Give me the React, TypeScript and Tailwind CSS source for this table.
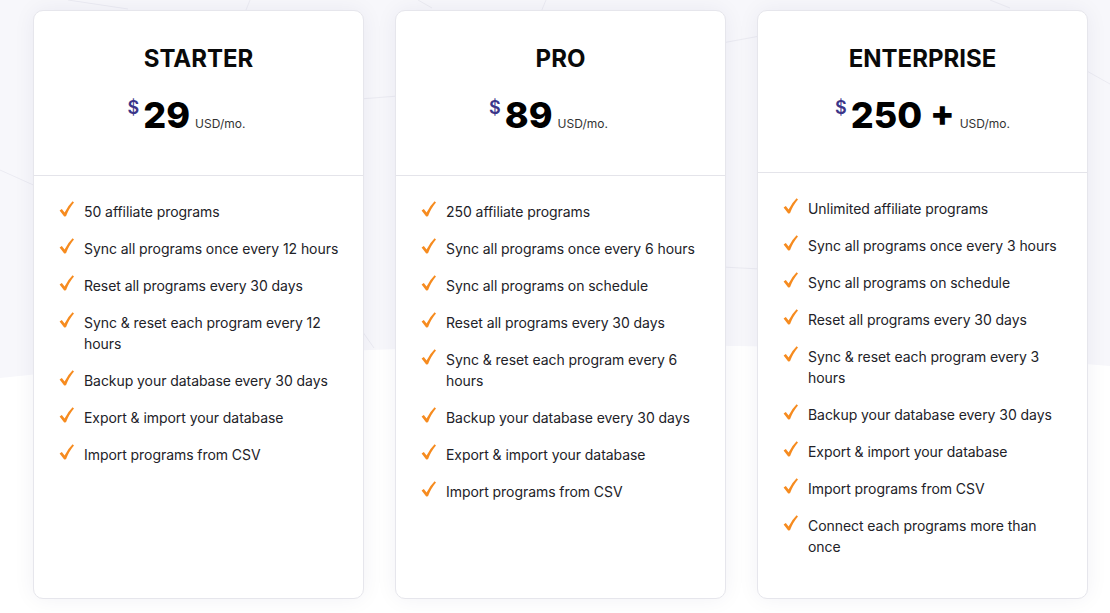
import React from "react";

type Plan = {
  name: string;
  price: string;
  shift: boolean;
  headerH: string;
  features: string[];
};

const plans: Plan[] = [
  {
    name: "STARTER",
    price: "29",
    shift: true,
    headerH: "h-[165px]",
    features: [
      "50 affiliate programs",
      "Sync all programs once every 12 hours",
      "Reset all programs every 30 days",
      "Sync & reset each program every 12 hours",
      "Backup your database every 30 days",
      "Export & import your database",
      "Import programs from CSV",
    ],
  },
  {
    name: "PRO",
    price: "89",
    shift: true,
    headerH: "h-[165px]",
    features: [
      "250 affiliate programs",
      "Sync all programs once every 6 hours",
      "Sync all programs on schedule",
      "Reset all programs every 30 days",
      "Sync & reset each program every 6 hours",
      "Backup your database every 30 days",
      "Export & import your database",
      "Import programs from CSV",
    ],
  },
  {
    name: "ENTERPRISE",
    price: "250 +",
    shift: false,
    headerH: "h-[162px]",
    features: [
      "Unlimited affiliate programs",
      "Sync all programs once every 3 hours",
      "Sync all programs on schedule",
      "Reset all programs every 30 days",
      "Sync & reset each program every 3 hours",
      "Backup your database every 30 days",
      "Export & import your database",
      "Import programs from CSV",
      "Connect each programs more than once",
    ],
  },
];

function Check() {
  return (
    <svg
      width="15"
      height="16"
      viewBox="0 0 15 16"
      className="flex-none mr-[10px]"
    >
      <path
        d="M0.6 9.4 L2.8 7.9 L5.6 11.6 Q8.8 4.8 13.6 0.2 L15 1.6 Q10.4 6.8 7 15.2 L5.2 15.4 Z"
        fill="#f68b1f"
      />
    </svg>
  );
}

function Card({ plan }: { plan: Plan }) {
  return (
    <div className="w-[331px] h-[589px] flex-none flex flex-col bg-white border border-[#e6e6ec] rounded-[10px] shadow-[0_0_22px_rgba(40,40,90,0.06)]">
      <div
        className={`${plan.headerH} flex-none flex flex-col items-center border-b border-[#e4e4ea]`}
      >
        <div className="mt-[32px] text-[24px] leading-[32px] font-bold text-[#0a0a0a]">
          {plan.name}
        </div>
        <div
          className={`mt-[22px] flex items-start ${plan.shift ? "pr-[24px]" : ""}`}
        >
          <span className="text-[18px] leading-[18px] mt-[2px] mr-[4px] text-[#3b3589] font-semibold">
            $
          </span>
          <div className="flex items-baseline">
            <span className="text-[36px] leading-[36px] font-extrabold text-black">
              {plan.price}
            </span>
            <span className="ml-[5px] text-[12px] text-[#333]">USD/mo.</span>
          </div>
        </div>
      </div>
      <ul className="flex flex-col gap-[16px] pt-[25px] pl-[25px] pr-[16px]">
        {plan.features.map((f) => (
          <li key={f} className="flex items-start">
            <Check />
            <span className="text-[14px] leading-[21px] tracking-[-0.06px] text-[#222228]">
              {f}
            </span>
          </li>
        ))}
      </ul>
    </div>
  );
}

export default function App() {
  return (
    <div
      className="relative w-full h-[613px] overflow-hidden bg-white"
      style={{ fontFamily: "Inter, 'Noto Sans', Arial, sans-serif" }}
    >
      <svg
        className="absolute inset-0"
        width="1110"
        height="613"
        viewBox="0 0 1110 613"
      >
        <path d="M0 0 H1110 V366 Q555 318 0 378 Z" fill="#f7f7fb" />
        <g stroke="#ebebf2" strokeWidth="1" fill="none">
          <line x1="0" y1="170" x2="40" y2="188" />
          <line x1="68" y1="0" x2="128" y2="9" />
          <line x1="418" y1="0" x2="432" y2="8" />
          <line x1="546" y1="0" x2="541" y2="12" />
          <line x1="250" y1="0" x2="246" y2="10" />
          <line x1="360" y1="99" x2="398" y2="96" />
          <line x1="722" y1="43" x2="760" y2="36" />
          <line x1="722" y1="267" x2="760" y2="269" />
          <line x1="1085" y1="70" x2="1110" y2="84" />
          <line x1="360" y1="328" x2="374" y2="348" />
          <line x1="990" y1="0" x2="1010" y2="8" />
        </g>
      </svg>
      <div className="relative flex gap-[31px] pl-[33px] pt-[10px]">
        {plans.map((p) => (
          <Card key={p.name} plan={p} />
        ))}
      </div>
    </div>
  );
}
